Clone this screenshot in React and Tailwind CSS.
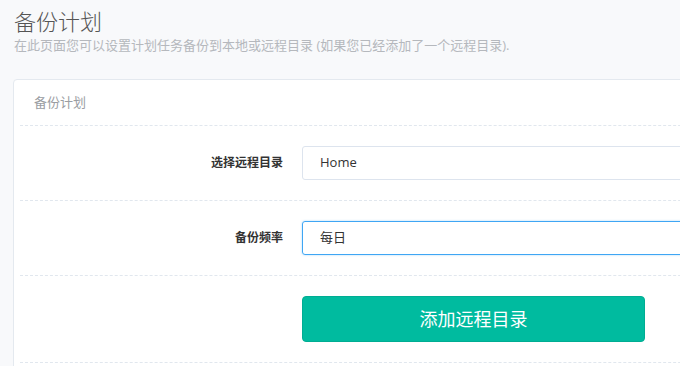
export default function App() {
  return (
    <div className="w-[680px] h-[366px] overflow-hidden bg-[#f8f9fb] font-['Open_Sans','Noto_Sans_CJK_SC',sans-serif]">
      <div className="pl-[14px] pt-[6px]">
        <h1 className="text-[22px] leading-[30px] text-[#555] font-light">备份计划</h1>
        <p className="text-[13px] leading-[16px] mt-[1px] text-[#b5b8bd]">
          在此页面您可以设置计划任务备份到本地或远程目录 (如果您已经添加了一个远程目录).
        </p>
      </div>

      <div className="ml-[13px] mt-[26px] w-[720px] bg-white border border-[#e4e9ef] rounded-[4px] px-[6px] pb-[20px]">
        <div className="h-[46px] flex items-center pl-[14px] border-b border-dashed border-[#e1e7ee] text-[13px] text-[#9a9da2]">
          备份计划
        </div>

        <div className="h-[75px] flex items-center border-b border-dashed border-[#e1e7ee]">
          <label className="w-[263px] text-right text-[12px] font-bold text-[#333]">选择远程目录</label>
          <div className="ml-[19px] flex-1 h-[34px] flex items-center pl-[17px] border border-[#dde4ee] rounded-[3px] text-[13px] text-[#333]">
            Home
          </div>
        </div>

        <div className="h-[75px] flex items-center border-b border-dashed border-[#e1e7ee]">
          <label className="w-[263px] text-right text-[12px] font-bold text-[#333]">备份频率</label>
          <div className="ml-[19px] flex-1 h-[34px] flex items-center pl-[17px] border border-[#3fa6f4] shadow-[0_0_2px_rgba(63,166,244,0.5)] rounded-[3px] text-[13px] text-[#333]">
            每日
          </div>
        </div>

        <div className="h-[87px] flex items-center border-b border-dashed border-[#e1e7ee]">
          <button className="ml-[282px] w-[343px] h-[46px] rounded-[4px] bg-[#00bb9f] border border-[#00ad93] text-white text-[18px]">
            添加远程目录
          </button>
        </div>
      </div>
    </div>
  );
}
